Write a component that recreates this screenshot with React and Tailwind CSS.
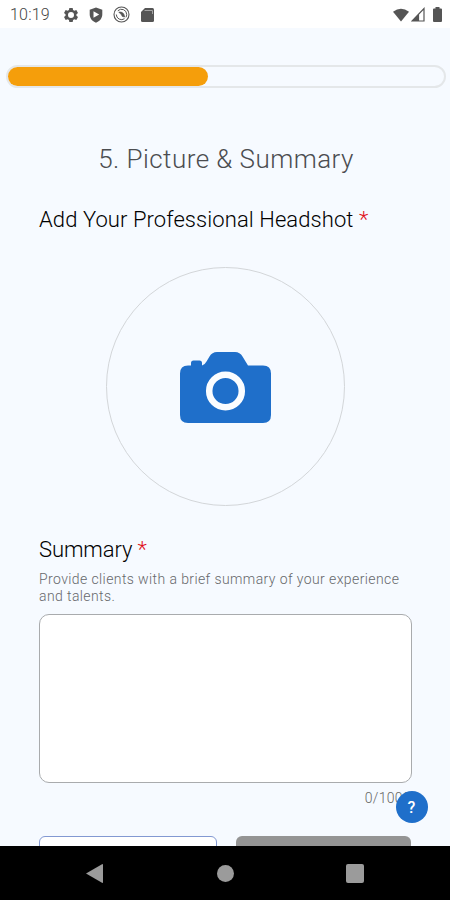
import React from "react";

function StatusBar() {
  return (
    <header className="flex h-7 shrink-0 items-center justify-between bg-white pt-px pl-2.5 pr-[8px] text-[#555]">
      <div className="flex items-center">
        <span className="w-[53px] text-[16px] font-light leading-none tracking-[0.2px] text-[#444]">10:19</span>
        <svg className="h-4 w-4" viewBox="0 0 24 24" fill="currentColor">
          <path fillRule="evenodd" d="M9.5 1.5h5l.6 3 1.900 1.100 3-1 2.500 4.300-2.300 2.100v2l2.300 2.100-2.500 4.300-3-1-1.900 1.100-.6 3h-5l-.6-3L7 18.400l-3 1-2.500-4.300L3.800 13v-2L1.500 8.900 4 4.600l3 1 1.900-1.100zM12 7.500a4.500 4.500 0 1 0 0 9 4.500 4.500 0 0 0 0-9z" />
        </svg>
        <svg className="ml-[9px] h-4 w-4" viewBox="0 0 16 16" fill="currentColor">
          <path fillRule="evenodd" d="M8 .4 14.300 2.700V7.500c0 3.600-2.500 6.800-6.300 8.200C4.200 14.300 1.700 11.100 1.700 7.500V2.700zM5.500 4.300v6.400L11.200 7.500z" />
        </svg>
        <svg className="ml-[9px] h-[17px] w-[17px]" viewBox="0 0 17 17" fill="none" stroke="currentColor">
          <circle cx="8.500" cy="8.500" r="7.500" strokeWidth="1.100" />
          <path d="M4.800 4.800A5.200 5.200 0 0 1 13.700 8.500a5.200 5.200 0 0 1-.8 2.800M11.500 12.700A5.200 5.200 0 0 1 3.300 8.500" strokeWidth="1" />
          <path d="M5.800 6.300c3-.8 5.500 1 5.700 4.700L9.200 10.300C8.700 8.500 7.500 7.300 5.800 6.300z" fill="currentColor" strokeWidth=".8" />
        </svg>
        <svg className="ml-[11px] h-[14px] w-[13px]" viewBox="0 0 13 14">
          <path d="M4 0h7.500Q13 0 13 1.500V12.500Q13 14 11.500 14h-10Q0 14 0 12.500V4z" fill="#555" />
          <path d="M3.500 2.500h8V6" fill="none" stroke="#a5a5a5" />
        </svg>
      </div>
      <div className="flex items-center">
        <svg className="h-[14px] w-[16px]" viewBox="0 0 17 14" fill="currentColor">
          <path d="M0 3.500Q8.500-3 17 3.500L8.500 14z" />
        </svg>
        <svg className="ml-[2px] h-[15px] w-[14px]" viewBox="0 0 14 15">
          <path d="M13 1.500V14H1zM7.500 7.500V14" fill="none" stroke="#555" strokeWidth="1.200" />
          <path d="M1 14 7.500 7.300V14z" fill="#555" />
        </svg>
        <svg className="ml-[8px] h-[15px] w-[9px]" viewBox="0 0 9 15" fill="currentColor">
          <path d="M2.500 0h4v1.500H8q1 0 1 1V14q0 1-1 1H1q-1 0-1-1V2.500q0-1 1-1h1.500z" />
        </svg>
      </div>
    </header>
  );
}

function Camera() {
  return (
    <svg className="mt-px h-[71px] w-[91px]" viewBox="0 0 91 71">
      <path d="M8 13.500h3V11q0-2.500 2.500-2.500h6Q22 8.500 22 11v2.500Q25 12.500 26.500 9.500L29.500 4.500Q32 0 37 0h18q5 0 7.500 4.500L68 13.500H83q8 0 8 8V63q0 8-8 8H8q-8 0-8-8V21.500q0-8 8-8z" fill="#1f6fca" />
      <circle cx="45.500" cy="39" r="16.300" fill="none" stroke="#fbfdff" strokeWidth="6.500" />
    </svg>
  );
}

function NavBar() {
  return (
    <nav className="flex h-[54px] shrink-0 items-center justify-between bg-black px-[86px] text-[#9b9b9b]">
      <svg className="h-[19px] w-[17px]" viewBox="0 0 17 19" fill="currentColor">
        <path d="M0 9.500 16 .2q1-.4 1 .6v17.400q0 1-1 .6z" />
      </svg>
      <span className="ml-px h-[17px] w-[17px] rounded-full bg-[#9b9b9b]" />
      <span className="h-[19px] w-[18px] rounded-[2px] bg-[#9b9b9b]" />
    </nav>
  );
}

export default function App() {
  return (
    <div className="relative flex h-[900px] w-[450px] flex-col overflow-hidden bg-[#f6faff] font-[Roboto,sans-serif]">
      <StatusBar />
      <main className="flex min-h-0 flex-1 flex-col overflow-hidden">
        <div className="ml-1.5 mt-[37px] h-[23px] w-[440px] shrink-0 rounded-full border-2 border-[#e4e7e9]">
          <div className="h-[19px] w-[200px] rounded-full bg-[#f59e0b]" />
        </div>
        <h1 className="mt-[55px] h-8 shrink-0 whitespace-nowrap pl-0.5 text-center text-[26px] font-light leading-8 tracking-[0.45px] text-[#4b4d50]">5. Picture &amp; Summary</h1>
        <section className="flex shrink-0 flex-col px-[39px] pt-[31px]">
          <h2 className="h-7 whitespace-nowrap text-[22px] font-light leading-7 tracking-[0.08px] text-black">
            Add Your Professional Headshot <span className="text-[#e0101c]">*</span>
          </h2>
          <button className="ml-[67px] mt-[33px] flex h-[239px] w-[239px] items-center justify-center rounded-full border border-[#d3d6d9]">
            <Camera />
          </button>
          <h2 className="mt-[30px] h-7 whitespace-nowrap text-[22px] font-light leading-7 tracking-[-0.1px] text-black">
            Summary <span className="text-[#e0101c]">*</span>
          </h2>
          <p className="mt-[7px] whitespace-nowrap text-[14px] font-light leading-[17px] tracking-[0.4px] text-[#66686b]">
            Provide clients with a brief summary of your experience<br />and talents.
          </p>
          <textarea aria-label="Summary" className="mt-[9px] block h-[169px] w-[373px] resize-none rounded-[10px] border border-[#a9abad] bg-white" />
          <div className="mt-[6px] h-[18px] self-end whitespace-nowrap text-[14px] font-light leading-[18px] tracking-[0.3px] text-[#666]">0/1000</div>
          <div className="mt-[29px] flex gap-[19px]">
            <button aria-label="Back" className="h-12 w-[178px] rounded-[6px] border border-[#8399d2] bg-white" />
            <button aria-label="Next" className="h-12 w-[176px] rounded-[6px] bg-[#949494]" />
          </div>
        </section>
      </main>
      <button className="absolute left-[395.5px] top-[790.5px] flex h-8 w-8 items-center justify-center rounded-full bg-[#1f6fca] pt-0.5 text-[16px] font-medium text-white">?</button>
      <NavBar />
    </div>
  );
}
